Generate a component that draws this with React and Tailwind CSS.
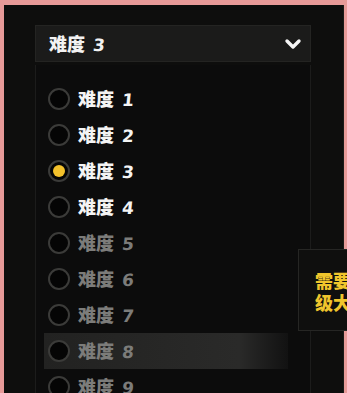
const levels = [1, 2, 3, 4, 5, 6, 7, 8, 9];

function Label({ n, className }) {
  return (
    <span className={`flex items-baseline gap-[8px] text-[18px] font-black leading-none ${className}`}>
      <span>难度</span>
      <span className="inline-block -skew-x-6 font-bold text-[17px]" style={{ fontFamily: '"DejaVu Sans", sans-serif' }}>
        {n}
      </span>
    </span>
  );
}

export default function App() {
  const selected = 3;
  return (
    <div
      className="w-[347px] h-[393px] overflow-hidden bg-[#e79a98] pl-[4px] pt-[5px] pr-[3px]"
      style={{ fontFamily: '"Noto Sans CJK SC", "Noto Sans", sans-serif' }}
    >
      <div className="relative h-[400px] bg-[#0e0e0d] pl-[31px] pt-[20px] pr-[32px] border-r border-[#1a1a18]">
        <div className="h-[37px] bg-[#1b1b1a] border border-[#242422] flex items-center justify-between pl-[13px] pr-[8px] text-white">
          <Label n={3} className="text-[#f2f2f2]" />
          <svg width="18" height="14" viewBox="0 0 18 14" className="mt-[1px]">
            <path d="M3 4 L9 10 L15 4" stroke="#f5f5f5" strokeWidth="3.4" fill="none" strokeLinecap="round" strokeLinejoin="round" />
          </svg>
        </div>
        <div className="mt-[3px] h-[340px] bg-[#0c0c0c] border-l border-r border-[#1c1c1b] pt-[16px] pl-[12px]">
          {levels.map((n) => {
            const active = n <= 4;
            return (
              <div
                key={n}
                className={`flex items-center h-[36px] gap-[8px] ${
                  n === 8 ? "bg-gradient-to-r from-[#222221] via-[#2a2a29] via-80% to-[#121212] -ml-[4px] pl-[4px] mr-[22px]" : ""
                }`}
              >
                <span className="w-[22px] h-[22px] rounded-full border-2 border-[#3b3b39] bg-[#050505] flex items-center justify-center">
                  {n === selected && <span className="w-[12px] h-[12px] rounded-full bg-[#f3c12b]" />}
                </span>
                <Label n={n} className={active ? "text-[#f4f4f4]" : "text-[#7c7c7a]"} />
              </div>
            );
          })}
        </div>
        <div className="absolute left-[294px] top-[244px] w-[60px] h-[82px] bg-[#0f0f0e] border border-[#262624] pl-[16px] pt-[19px] text-[#f0c52c] text-[18px] font-black leading-[22px] whitespace-nowrap">
          <div>需要</div>
          <div>级大</div>
        </div>
      </div>
    </div>
  );
}
